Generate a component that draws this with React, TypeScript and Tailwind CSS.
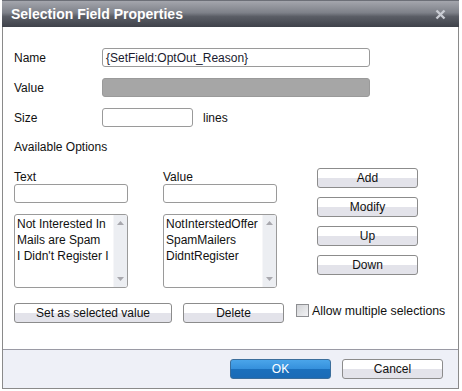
const font = { fontFamily: '"Liberation Sans", Arial, sans-serif' };

const Btn = ({ label, w }: { label: string; w: string }) => (
  <div
    className={`${w} h-[20px] rounded-[3px] border border-[#8c8c8c] bg-[linear-gradient(to_bottom,#ffffff_0%,#ffffff_52%,#e3e3ea_52%,#e3e3ea_100%)] flex items-center justify-center text-[12px] text-[#111]`}
  >
    {label}
  </div>
);

const Input = ({ w, value, gray }: { w: string; value?: string; gray?: boolean }) => (
  <div
    className={`${w} h-[19px] rounded-[3px] border border-[#9a9a9a] ${
      gray ? "bg-[#a6a6a6]" : "bg-white"
    } flex items-center px-[3px] text-[12px] text-[#1a1a2e]`}
  >
    {value}
  </div>
);

const ListBox = ({ items }: { items: string[] }) => (
  <div className="w-[114px] h-[74px] rounded-[3px] border border-[#9a9a9a] bg-white flex overflow-hidden">
    <div className="flex-1 pl-[2px] pt-[1px] flex flex-col text-[12px] leading-[16px] text-[#111] whitespace-nowrap overflow-hidden">
      {items.map((it) => (
        <span key={it}>{it}</span>
      ))}
    </div>
    <div className="w-[14px] bg-[#eceef2] border-l border-[#f6f6f8] flex flex-col items-center justify-between py-[6px]">
      <svg width="7" height="4" viewBox="0 0 7 4">
        <path d="M0 4 L3.5 0 L7 4 Z" fill="#a8a8ae" />
      </svg>
      <svg width="7" height="4" viewBox="0 0 7 4">
        <path d="M0 0 L3.5 4 L7 0 Z" fill="#a8a8ae" />
      </svg>
    </div>
  </div>
);

export default function App() {
  return (
    <div className="w-[462px] h-[391px] bg-white" style={font}>
      <div className="ml-[2px] w-[457px] h-[389px] border border-[#8a8a8a] border-t-0 flex flex-col bg-white">
        <div className="h-[27px] -mx-[1px] bg-[linear-gradient(to_bottom,#a4a6ad_0%,#7e8189_45%,#5a5d65_60%,#3f424a_100%)] border-t border-[#6c6f77] flex items-center justify-between pl-[9px] pr-[13px]">
          <span className="text-[14px] font-bold text-white tracking-[0px]">
            Selection Field Properties
          </span>
          <svg width="11" height="11" viewBox="0 0 11 11">
            <path d="M1.5 1.5 L9.5 9.5 M9.5 1.5 L1.5 9.5" stroke="#c9ccd3" strokeWidth="2.4" />
          </svg>
        </div>

        <div className="flex-1 flex flex-col pl-[11px] text-[12px] text-[#111]">
          <div className="mt-[21px] flex items-center h-[19px]">
            <span className="w-[88px]">Name</span>
            <Input w="w-[268px]" value="{SetField:OptOut_Reason}" />
          </div>
          <div className="mt-[11px] flex items-center h-[19px]">
            <span className="w-[88px]">Value</span>
            <Input w="w-[268px]" gray />
          </div>
          <div className="mt-[11px] flex items-center h-[19px]">
            <span className="w-[88px]">Size</span>
            <Input w="w-[91px]" />
            <span className="ml-[10px]">lines</span>
          </div>
          <div className="mt-[13px] h-[14px] leading-[14px]">Available Options</div>

          <div className="mt-[14px] flex">
            <div className="w-[114px] flex flex-col">
              <span className="mt-[2px] h-[14px] leading-[14px]">Text</span>
              <Input w="w-[114px]" />
              <div className="mt-[11px]">
                <ListBox items={["Not Interested In", "Mails are Spam", "I Didn't Register I"]} />
              </div>
            </div>
            <div className="ml-[35px] w-[114px] flex flex-col">
              <span className="mt-[2px] h-[14px] leading-[14px]">Value</span>
              <Input w="w-[114px]" />
              <div className="mt-[11px]">
                <ListBox items={["NotInterstedOffer", "SpamMailers", "DidntRegister"]} />
              </div>
            </div>
            <div className="ml-[40px] flex flex-col gap-[9px]">
              <Btn label="Add" w="w-[101px]" />
              <Btn label="Modify" w="w-[101px]" />
              <Btn label="Up" w="w-[101px]" />
              <Btn label="Down" w="w-[101px]" />
            </div>
          </div>

          <div className="mt-[15px] flex items-center">
            <Btn label="Set as selected value" w="w-[158px]" />
            <div className="ml-[11px]">
              <Btn label="Delete" w="w-[101px]" />
            </div>
            <div className="ml-[12px] w-[13px] h-[13px] border border-[#8e8f92] bg-[linear-gradient(to_bottom_right,#d2d3d6,#f3f3f5)] -mt-[6px]" />
            <span className="ml-[3px] -mt-[3px] text-[12.3px]">Allow multiple selections</span>
          </div>
        </div>

        <div className="h-[39px] border-t border-[#9a9aa4] bg-[#eef0f7] flex items-center justify-end pr-[15px] gap-[11px]">
          <div className="w-[101px] h-[20px] rounded-[3px] border border-[#3b6e9c] bg-[linear-gradient(to_bottom,#4aa5ea_0%,#3590dc_50%,#1b70bd_50%,#1b6bb6_100%)] flex items-center justify-center text-[12px] text-white">
            OK
          </div>
          <Btn label="Cancel" w="w-[101px]" />
        </div>
      </div>
    </div>
  );
}
